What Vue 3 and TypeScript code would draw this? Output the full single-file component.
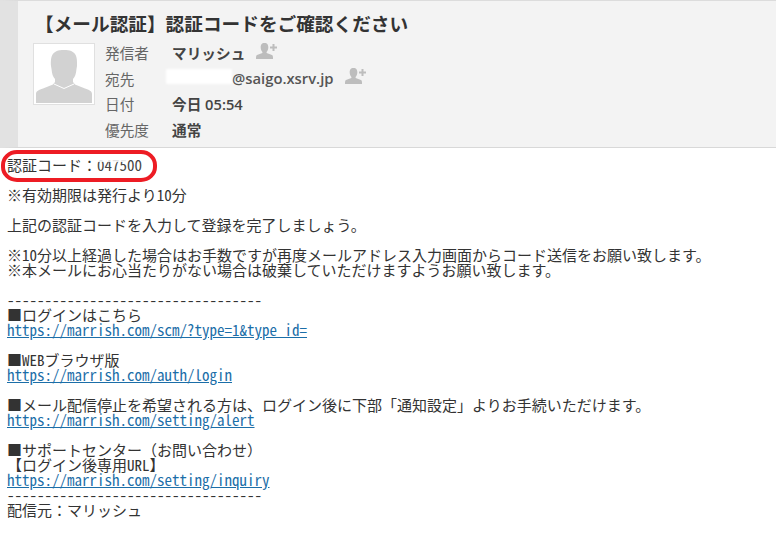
<script setup lang="ts">
interface Meta { label: string; kind: string; text: string; add: boolean }
const metas: Meta[] = [
  { label: '発信者', kind: 'sender', text: 'マリッシュ', add: true },
  { label: '宛先', kind: 'to', text: '@saigo.xsrv.jp', add: true },
  { label: '日付', kind: 'date', text: '今日 05:54', add: false },
  { label: '優先度', kind: 'prio', text: '通常', add: false },
]
</script>

<template>
  <div class="page">
    <header class="head">
      <h1 class="subject">【メール認証】認証コードをご確認ください</h1>
      <div class="info">
        <div class="avatar">
          <svg viewBox="0 0 60 60" width="60" height="60">
            <path d="M2 59V50C2 47 5 46 9 44.5L19 40.5L21 38V35C19 33 18 30 17.5 25L17 22C16.5 12 18 6 30 6C42 6 43.5 12 43 22L42.5 25C42 30 41 33 39 35V38L41 40.5L51 44.5C55 46 58 47 58 50V59Z" fill="#d2d2d2" />
            <path d="M20 40L30 44.5L40 40" fill="none" stroke="#fff" stroke-width="1" />
          </svg>
        </div>
        <div class="rows">
          <div v-for="m in metas" :key="m.label" class="row">
            <span class="label">{{ m.label }}</span>
            <span class="value" :class="m.kind">
              <span v-if="m.kind === 'to'" class="mask"></span>{{ m.text }}
            </span>
            <svg v-if="m.add" class="add" viewBox="0 0 21 16" width="21" height="16">
              <path d="M8.5 0C11.5 0 12.3 2 12.3 4.5C12.3 6.5 11.3 8 10.6 9V10L16 12C17 12.5 17 14 17 16H0C0 14 0 12.5 1 12L6.4 10V9C5.7 8 4.7 6.5 4.7 4.5C4.7 2 5.5 0 8.5 0Z" fill="#bdbdbd" />
              <path d="M14 4.5H21M17.5 1V8" stroke="#bdbdbd" stroke-width="2" />
            </svg>
          </div>
        </div>
      </div>
    </header>

    <main class="body">
      <div class="highlight"></div>
      <p>認証コード<span class="fw">：</span><span class="code">047500<span class="smudge"></span></span></p>
      <p>※有効期限は発行より10分</p>
      <p>上記の認証コードを入力して登録を完了しましょう。</p>
      <p>※10分以上経過した場合はお手数ですが再度メールアドレス入力画面からコード送信をお願い致します。<br />※本メールにお心当たりがない場合は破棄していただけますようお願い致します。</p>
      <p>
        ----------------------------------<br />
        ■ログインはこちら<br />
        <a>https://marrish.com/scm/?type=1&amp;type_id=</a>
      </p>
      <p>■WEBブラウザ版<br /><a>https://marrish.com/auth/login</a></p>
      <p>■メール配信停止を希望される方は、ログイン後に下部「通知設定」よりお手続いただけます。<br /><a>https://marrish.com/setting/alert</a></p>
      <p>
        ■サポートセンター<span class="fw">（</span>お問い合わせ<span class="fw">）</span><br />
        【ログイン後専用URL】<br />
        <a>https://marrish.com/setting/inquiry</a><br />
        ----------------------------------<br />
        配信元<span class="fw">：</span>マリッシュ
      </p>
    </main>
  </div>
</template>

<style>
html, body { margin: 0; background: #fff; }
</style>

<style scoped>
.page {
  width: 776px;
  height: 544px;
  overflow: hidden;
  background: #fff;
  font-family: "Noto Sans CJK JP", sans-serif;
  color: #333;
}
.head {
  box-sizing: border-box;
  height: 148px;
  padding: 11px 0 0 17px;
  background: #f3f3f3;
  border-top: 1px solid #dcdcdc;
  border-bottom: 1px solid #d8d8d8;
  border-left: 18px solid #e2e2e2;
}
.subject {
  margin: 0 0 9px;
  font-size: 18.67px;
  line-height: 22px;
  font-weight: 700;
  color: #333;
}
.info {
  display: flex;
  margin-left: -2px;
}
.avatar {
  box-sizing: border-box;
  width: 62px;
  height: 62px;
  background: #fff;
  border: 1px solid #e0e0e0;
  line-height: 0;
}
.rows {
  margin-left: 10px;
  margin-top: -3px;
}
.row {
  display: flex;
  align-items: center;
  height: 25.6px;
}
.label {
  width: 67px;
  font-size: 14.67px;
  color: #666;
}
.value {
  position: relative;
  font-size: 14.67px;
  font-weight: 600;
  color: #444;
  font-family: "Open Sans", "Noto Sans CJK JP", sans-serif;
}
.value.to {
  padding-left: 60px;
  font-size: 14.8px;
  font-weight: 600;
  color: #555;
}
.mask {
  position: absolute;
  left: -6px;
  top: 1px;
  width: 66px;
  height: 15px;
  background: #fff;
  filter: blur(1px);
}
.add { margin-left: 11px; margin-top: -4px; }
.body {
  position: relative;
  padding: 9px 0 0 7px;
  font-size: 15px;
  line-height: 15px;
  font-feature-settings: "hwid";
  color: #333;
}
.body p {
  margin: 0 0 15px;
  white-space: nowrap;
}
.fw { font-feature-settings: normal; }
a { color: #1b6ea8; text-decoration: underline; }
.code { position: relative; color: #444; }
.smudge {
  position: absolute;
  left: 0;
  top: 1px;
  width: 30px;
  height: 7px;
  background: #fff;
  opacity: 0.85;
  filter: blur(0.6px);
}
.highlight {
  position: absolute;
  box-sizing: border-box;
  left: 1px;
  top: 2px;
  width: 156px;
  height: 32px;
  border: 4.5px solid #ed1c24;
  border-radius: 16px / 15px;
}
</style>
